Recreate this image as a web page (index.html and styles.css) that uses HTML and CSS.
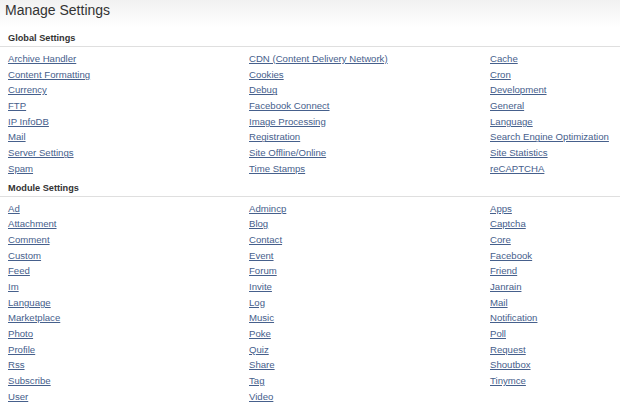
FILE: index.html
```html
<!DOCTYPE html>
<html>

<head>
    <meta charset="UTF-8">
    <title>Manage Settings</title>
    <link rel="stylesheet" href="styles.css">
</head>

<body>

    <div class="page-header">
        <h1>Manage Settings</h1>
    </div>

    <div class="settings-group">
        <h3>Global Settings</h3>
        <div class="settings-links">
            <a href="#">Archive Handler</a>
            <a href="#">CDN (Content Delivery Network)</a>
            <a href="#">Cache</a>
            <a href="#">Content Formatting</a>
            <a href="#">Cookies</a>
            <a href="#">Cron</a>
            <a href="#">Currency</a>
            <a href="#">Debug</a>
            <a href="#">Development</a>
            <a href="#">FTP</a>
            <a href="#">Facebook Connect</a>
            <a href="#">General</a>
            <a href="#">IP InfoDB</a>
            <a href="#">Image Processing</a>
            <a href="#">Language</a>
            <a href="#">Mail</a>
            <a href="#">Registration</a>
            <a href="#">Search Engine Optimization</a>
            <a href="#">Server Settings</a>
            <a href="#">Site Offline/Online</a>
            <a href="#">Site Statistics</a>
            <a href="#">Spam</a>
            <a href="#">Time Stamps</a>
            <a href="#">reCAPTCHA</a>
        </div>
    </div>

    <div class="settings-group">
        <h3>Module Settings</h3>
        <div class="settings-links">
            <a href="#">Ad</a>
            <a href="#">Admincp</a>
            <a href="#">Apps</a>
            <a href="#">Attachment</a>
            <a href="#">Blog</a>
            <a href="#">Captcha</a>
            <a href="#">Comment</a>
            <a href="#">Contact</a>
            <a href="#">Core</a>
            <a href="#">Custom</a>
            <a href="#">Event</a>
            <a href="#">Facebook</a>
            <a href="#">Feed</a>
            <a href="#">Forum</a>
            <a href="#">Friend</a>
            <a href="#">Im</a>
            <a href="#">Invite</a>
            <a href="#">Janrain</a>
            <a href="#">Language</a>
            <a href="#">Log</a>
            <a href="#">Mail</a>
            <a href="#">Marketplace</a>
            <a href="#">Music</a>
            <a href="#">Notification</a>
            <a href="#">Photo</a>
            <a href="#">Poke</a>
            <a href="#">Poll</a>
            <a href="#">Profile</a>
            <a href="#">Quiz</a>
            <a href="#">Request</a>
            <a href="#">Rss</a>
            <a href="#">Share</a>
            <a href="#">Shoutbox</a>
            <a href="#">Subscribe</a>
            <a href="#">Tag</a>
            <a href="#">Tinymce</a>
            <a href="#">User</a>
            <a href="#">Video</a>
        </div>
    </div>

</body>

</html>
```

FILE: styles.css
```css
/* styles.css */

body {
    margin: 0;
    padding: 0;
    font-family: "Liberation Sans", Arial, sans-serif;
    background-color: #fff;
    color: #333;
    overflow: hidden;
}

/* Cabecera con degradado suave */
.page-header {
    height: 27px;
    background: linear-gradient(to bottom, #f1f1f1, #fff);
}

.page-header h1 {
    margin: 0;
    padding: 2px 5px 0;
    font-size: 14px;
    line-height: 16px;
    font-weight: normal;
    color: #333;
}

.settings-group {
    margin-top: 5px;
}

.settings-group h3 {
    margin: 0;
    padding: 0 8px 2px;
    font-size: 9.2px;
    line-height: 12px;
    font-weight: bold;
    color: #333;
    border-bottom: 1px solid #dfdfdf;
}

.settings-links {
    display: grid;
    grid-template-columns: 241px 241px 1fr;
    grid-auto-rows: 15.7px;
    padding: 4px 0 0 8px;
}

.settings-links a {
    font-size: 9.6px;
    line-height: 15.7px;
    color: #46608c;
    text-decoration: underline;
    white-space: nowrap;
}
```
